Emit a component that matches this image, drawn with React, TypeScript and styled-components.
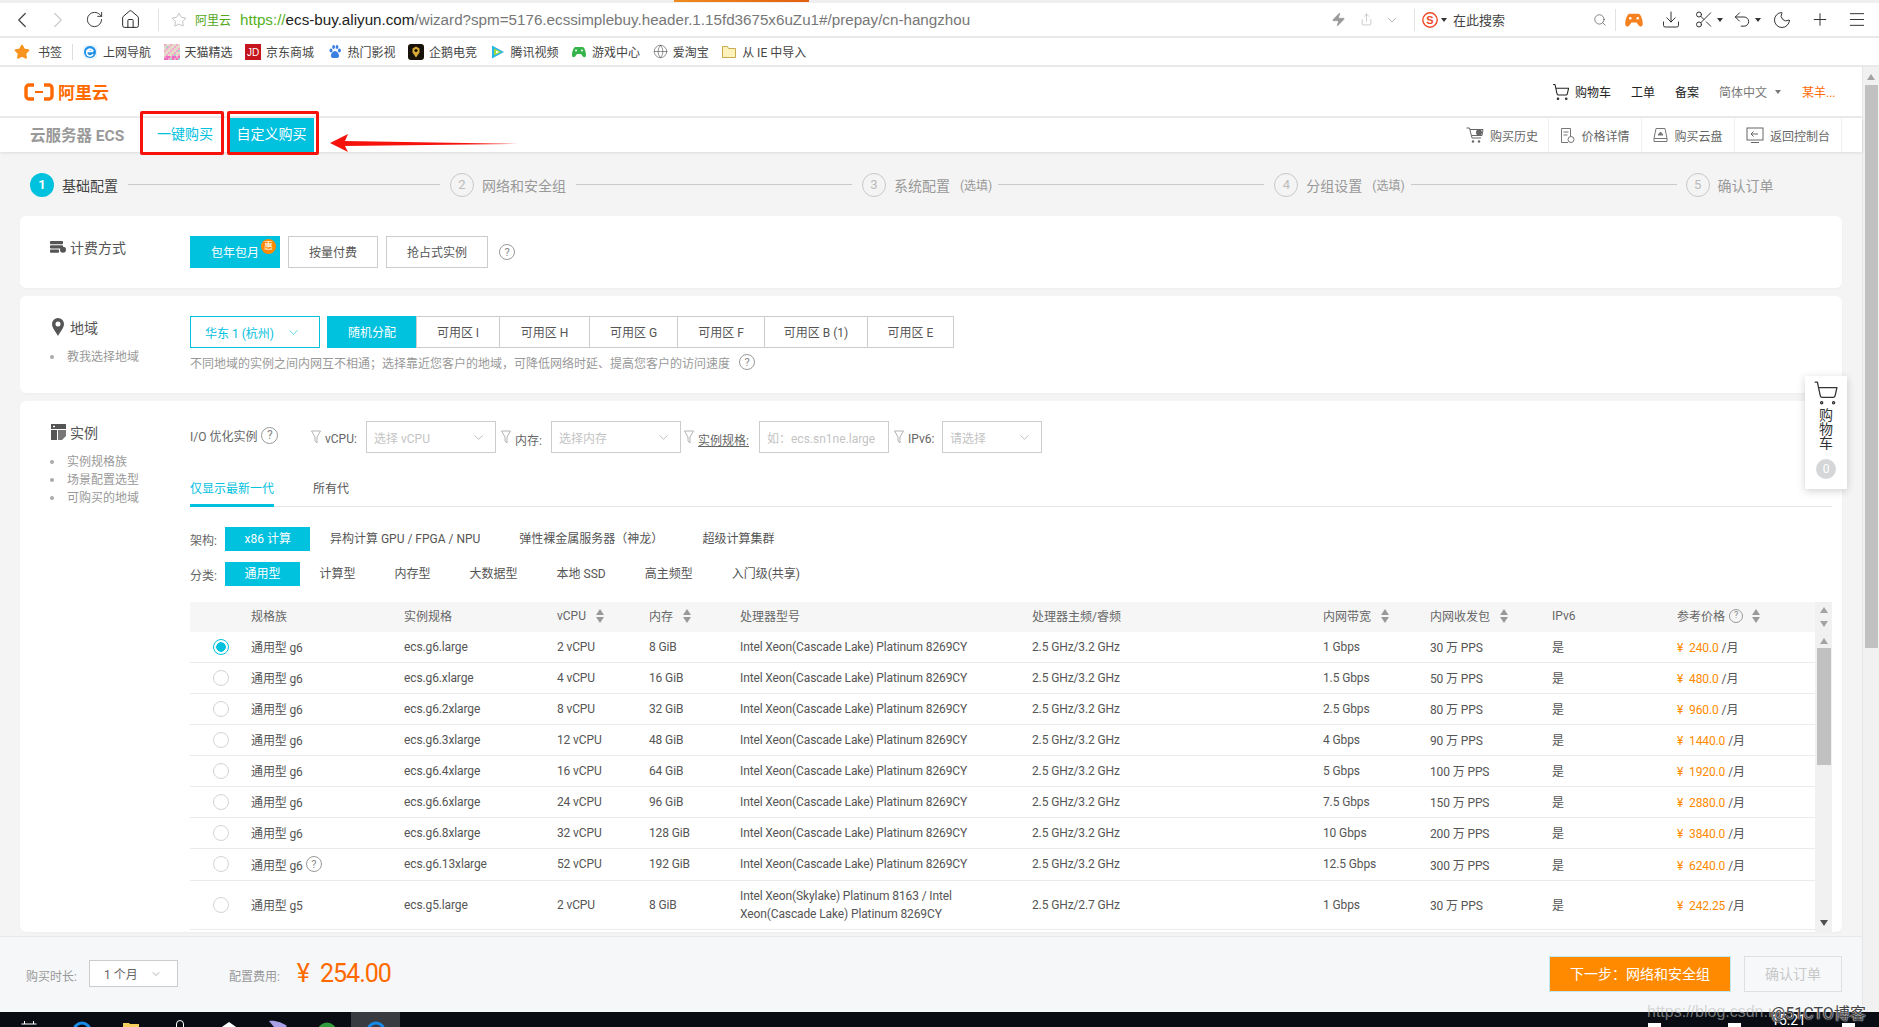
import React from "react";
import styled, { createGlobalStyle } from "styled-components";
import {
  ChevronLeft,
  ChevronRight,
  ChevronDown,
  RotateCw,
  Home,
  Star,
  Zap,
  Share,
  Search,
  Download,
  Scissors,
  Undo2,
  Moon,
  Plus,
  Menu,
  ShoppingCart,
  Globe,
} from "lucide-react";

const CYAN = "#00c1de";
const FONT = `Roboto, "Noto Sans CJK SC", sans-serif`;

const GlobalStyle = createGlobalStyle`
  html, body { margin: 0; padding: 0; background: #fff; }
  body { font-family: ${FONT}; font-size: 12px; color: #555; }
  * { box-sizing: border-box; }
`;

const Screen = styled.div`
  position: relative;
  width: 1879px;
  height: 1027px;
  overflow: hidden;
  display: flex;
  flex-direction: column;
`;

/* browser chrome */
const TabStrip = styled.div`
  height: 3px;
  background: #efefef;
  padding-left: 674px;
`;
const ActiveTab = styled.div`
  width: 135px;
  height: 2px;
  background: linear-gradient(90deg, #f08a1d, #e2600f);
`;
const Toolbar = styled.div`
  height: 35px;
  display: flex;
  align-items: center;
  padding-left: 4px;
  border-bottom: 2px solid #e9e9e9;
  background: #fff;
`;
const Slot = styled.span<{ $w?: number; $ml?: number }>`
  width: ${(p) => p.$w ?? 20}px;
  margin-left: ${(p) => p.$ml ?? 0}px;
  flex: none;
  display: flex;
  justify-content: center;
  align-items: center;
  color: #444;
`;
const ToolSep = styled.span<{ $ml: number }>`
  width: 1px;
  height: 22px;
  background: #e2e2e2;
  margin-left: ${(p) => p.$ml}px;
  flex: none;
`;
const Caret = styled.span<{ $ml?: number; $color?: string }>`
  width: 0;
  height: 0;
  flex: none;
  margin-left: ${(p) => p.$ml ?? 0}px;
  border: 3.5px solid transparent;
  border-top: 4px solid ${(p) => p.$color ?? "#333"};
  border-bottom: 0;
`;
const SiteName = styled.span`
  color: #52a818;
  font-size: 12px;
  margin-left: 6px;
  width: 36px;
  flex: none;
`;
const Url = styled.div`
  font-family: "Liberation Sans", sans-serif;
  font-size: 15.2px;
  margin-left: 9px;
  width: 1088px;
  flex: none;
  color: #777;
  white-space: nowrap;
`;
const UrlScheme = styled.span`
  color: #55b01e;
`;
const UrlHost = styled.span`
  color: #222;
`;
const SearchText = styled.span`
  font-size: 13px;
  color: #444;
  margin-left: 6px;
  width: 52px;
  flex: none;
`;
const Bookmarks = styled.div`
  height: 29px;
  display: flex;
  align-items: center;
  padding-left: 14px;
  border-bottom: 2px solid #e9e9e9;
  background: #fff;
  color: #444;
`;
const Bookmark = styled.span<{ $gap?: number; $ml?: number }>`
  display: flex;
  align-items: center;
  gap: ${(p) => p.$gap ?? 5}px;
  margin-left: ${(p) => p.$ml ?? 12.5}px;
  white-space: nowrap;
`;
const BookmarkSep = styled.span`
  width: 1px;
  height: 16px;
  background: #ddd;
  margin-left: 10px;
`;

/* page shell */
const Viewport = styled.div`
  flex: 1;
  min-height: 0;
  display: flex;
`;
const Page = styled.div`
  position: relative;
  width: 1862px;
  display: flex;
  flex-direction: column;
  background: #f4f4f4;
`;
const PageScrollbar = styled.div`
  width: 17px;
  background: #f1f1f1;
  border-left: 1px solid #e6e6e6;
  display: flex;
  flex-direction: column;
  align-items: center;
  padding-top: 7px;
`;
const PageThumb = styled.div`
  width: 13px;
  height: 563px;
  background: #c1c1c1;
  margin-top: 5px;
`;
const ScrollArrow = styled.span<{ $down?: boolean; $color?: string }>`
  width: 0;
  height: 0;
  flex: none;
  border-left: 4px solid transparent;
  border-right: 4px solid transparent;
  ${(p) =>
    p.$down
      ? `border-top: 6px solid ${p.$color ?? "#505050"};`
      : `border-bottom: 6px solid ${p.$color ?? "#a3a3a3"};`}
`;

const LogoRow = styled.div`
  height: 51px;
  display: flex;
  align-items: center;
  padding: 0 22px 0 24px;
  background: #fff;
  border-bottom: 2px solid #ececec;
`;
const LogoText = styled.span`
  font-size: 17px;
  font-weight: 700;
  color: #ff6a00;
  margin-left: 4px;
`;
const TopLinks = styled.div`
  margin-left: auto;
  display: flex;
  align-items: center;
  color: #333;
`;
const TopLink = styled.span<{ $ml?: number; $color?: string; $w?: number }>`
  margin-left: ${(p) => p.$ml ?? 20}px;
  color: ${(p) => p.$color ?? "#222"};
  width: ${(p) => (p.$w ? `${p.$w}px` : "auto")};
  display: flex;
  align-items: center;
  white-space: nowrap;
`;
const SubNav = styled.div`
  position: relative;
  z-index: 2;
  height: 34px;
  display: flex;
  background: #fff;
  padding-left: 30px;
  box-shadow: 0 1px 3px rgba(0, 0, 0, 0.1);
`;
const ProductName = styled.div`
  font-size: 15.5px;
  font-weight: 700;
  color: #999;
  line-height: 36px;
  width: 111px;
  white-space: nowrap;
`;
const SubTab = styled.div<{ $active?: boolean; $w: number }>`
  width: ${(p) => p.$w}px;
  font-size: 14px;
  line-height: 32px;
  text-align: center;
  color: ${(p) => (p.$active ? "#fff" : CYAN)};
  background: ${(p) => (p.$active ? CYAN : "#fff")};
`;
const SubLinks = styled.div`
  margin-left: auto;
  display: flex;
  margin-right: 20px;
  color: #666;
`;
const SubLink = styled.div<{ $w: number }>`
  width: ${(p) => p.$w}px;
  display: flex;
  align-items: center;
  justify-content: center;
  gap: 6px;
  border-right: 1px solid #f0f0f0;
  white-space: nowrap;
`;
const RedMark = styled.div<{ $left: number; $w: number }>`
  position: absolute;
  left: ${(p) => p.$left}px;
  top: -7px;
  width: ${(p) => p.$w}px;
  height: 44px;
  border: 3px solid #f5130c;
  border-radius: 2px;
`;
const RedArrow = styled.svg`
  position: absolute;
  left: 330px;
  top: 16px;
`;

/* stepper */
const Scroll = styled.div`
  flex: 1;
  min-height: 0;
  overflow: hidden;
  padding: 0 20px;
`;
const Stepper = styled.div`
  height: 64px;
  padding: 1px 0 0 10px;
  display: flex;
  align-items: center;
  color: #999;
  font-size: 14px;
`;
const StepNo = styled.span<{ $on?: boolean; $ml?: number }>`
  width: 24px;
  height: 24px;
  border-radius: 50%;
  flex: none;
  margin-left: ${(p) => p.$ml ?? 0}px;
  display: flex;
  align-items: center;
  justify-content: center;
  font-size: 13px;
  color: ${(p) => (p.$on ? "#fff" : "#bbb")};
  font-weight: ${(p) => (p.$on ? 700 : 400)};
  background: ${(p) => (p.$on ? CYAN : "transparent")};
  border: ${(p) => (p.$on ? "0" : "1px solid #c8c8c8")};
`;
const StepName = styled.span<{ $on?: boolean }>`
  margin-left: 8px;
  color: ${(p) => (p.$on ? "#444" : "#999")};
  white-space: nowrap;
`;
const StepOpt = styled.span`
  margin-left: 10px;
  font-size: 12px;
  white-space: nowrap;
`;
const StepLine = styled.span<{ $w: number; $ml: number }>`
  width: ${(p) => p.$w}px;
  margin-left: ${(p) => p.$ml}px;
  height: 1px;
  background: #c9c9c9;
  flex: none;
`;

/* cards */
const Card = styled.section<{ $h?: number }>`
  display: grid;
  grid-template-columns: 140px 1fr;
  align-items: start;
  padding: 20px 0 0 30px;
  background: #fff;
  border-radius: 6px;
  margin-bottom: 8px;
  min-height: ${(p) => p.$h ?? 0}px;
  box-shadow: 0 1px 2px rgba(0, 0, 0, 0.03);
`;
const SideTitle = styled.div`
  display: flex;
  align-items: center;
  height: 22px;
  font-size: 14px;
  color: #555;
  gap: 4px;
`;
const SideIcon = styled.span`
  width: 16px;
  display: flex;
  justify-content: center;
`;
const SideList = styled.ul`
  list-style: none;
  margin: 10px 0 0;
  padding: 0;
`;
const SideItem = styled.li`
  height: 18px;
  line-height: 18px;
  padding-left: 17px;
  color: #999;
  position: relative;
  &::before {
    content: "";
    position: absolute;
    left: 0;
    top: 7px;
    width: 4px;
    height: 4px;
    border-radius: 50%;
    background: #aaa;
  }
`;
const ButtonRow = styled.div`
  display: flex;
  align-items: center;
  height: 32px;
  gap: 8px;
`;
const ChoiceButton = styled.div<{ $w: number; $on?: boolean }>`
  position: relative;
  width: ${(p) => p.$w}px;
  height: 32px;
  line-height: 33px;
  text-align: center;
  color: ${(p) => (p.$on ? "#fff" : "#555")};
  background: ${(p) => (p.$on ? CYAN : "#fff")};
  border: 1px solid ${(p) => (p.$on ? CYAN : "#ccc")};
`;
const Badge = styled.span`
  position: absolute;
  right: 3px;
  top: 2px;
  width: 15px;
  height: 15px;
  border-radius: 50%;
  background: #ff8a00;
  color: #fff;
  font-size: 9px;
  line-height: 15px;
  text-align: center;
`;
const Help = styled.span<{ $size?: number; $ml?: number }>`
  display: inline-flex;
  flex: none;
  align-items: center;
  justify-content: center;
  width: ${(p) => p.$size ?? 16}px;
  height: ${(p) => p.$size ?? 16}px;
  margin-left: ${(p) => p.$ml ?? 0}px;
  border: 1px solid #999;
  border-radius: 50%;
  color: #888;
  font-size: ${(p) => (p.$size ?? 16) - 5}px;
  line-height: 1;
`;
const RegionRow = styled.div`
  display: flex;
`;
const SelectBox = styled.div<{ $w: number; $h?: number; $tone?: "cyan" | "mute" | "plain"; $ml?: number }>`
  width: ${(p) => p.$w}px;
  height: ${(p) => p.$h ?? 32}px;
  margin-left: ${(p) => p.$ml ?? 0}px;
  flex: none;
  display: flex;
  align-items: center;
  justify-content: space-between;
  padding: 0 ${(p) => (p.$tone === "cyan" ? 18 : p.$tone === "plain" ? 15 : 9)}px 0
    ${(p) => (p.$tone === "mute" ? 7 : 14)}px;
  background: #fff;
  border: 1px solid ${(p) => (p.$tone === "cyan" ? CYAN : "#ccc")};
  color: ${(p) => (p.$tone === "cyan" ? CYAN : p.$tone === "plain" ? "#666" : "#c4c4c4")};
  white-space: nowrap;
`;
const Zones = styled.div`
  display: flex;
  margin-left: 7px;
`;
const Zone = styled.div<{ $w: number; $on?: boolean }>`
  width: ${(p) => p.$w}px;
  height: 32px;
  line-height: 32px;
  text-align: center;
  margin-right: -1px;
  color: ${(p) => (p.$on ? "#fff" : "#555")};
  background: ${(p) => (p.$on ? CYAN : "#fff")};
  border: 1px solid ${(p) => (p.$on ? CYAN : "#ccc")};
  white-space: nowrap;
`;
const Hint = styled.div`
  margin-top: 5px;
  height: 18px;
  display: flex;
  align-items: center;
  gap: 9px;
  color: #999;
`;

/* instance card */
const FilterRow = styled.div`
  display: flex;
  align-items: flex-start;
  height: 32px;
`;
const IoLabel = styled.span`
  display: flex;
  align-items: center;
  gap: 4px;
  height: 28px;
  color: #666;
  width: 121px;
  flex: none;
`;
const FilterGroup = styled.div<{ $ml?: number }>`
  display: flex;
  align-items: center;
  margin-left: ${(p) => p.$ml ?? 5}px;
`;
const FilterLabel = styled.span<{ $link?: boolean; $w: number }>`
  width: ${(p) => p.$w}px;
  margin-left: 4px;
  padding-top: 4px;
  flex: none;
  color: #666;
  white-space: nowrap;
  text-decoration: ${(p) => (p.$link ? "underline" : "none")};
`;
const Tabs = styled.div`
  display: flex;
  gap: 39px;
  margin: 20px 14px 0 0;
  height: 34px;
  border-bottom: 1px solid #e6e6e6;
`;
const Tab = styled.div<{ $on?: boolean }>`
  height: 34px;
  line-height: 32px;
  color: ${(p) => (p.$on ? CYAN : "#555")};
  border-bottom: ${(p) => (p.$on ? `3px solid ${CYAN}` : "0")};
`;
const PickRow = styled.div<{ $mt: number }>`
  display: flex;
  align-items: center;
  height: 24px;
  margin-top: ${(p) => p.$mt}px;
`;
const PickLabel = styled.span`
  width: 35px;
  color: #666;
  flex: none;
`;
const Pick = styled.span<{ $on?: boolean }>`
  height: 24px;
  line-height: 24px;
  padding: 0 19.5px;
  white-space: nowrap;
  color: ${(p) => (p.$on ? "#fff" : "#555")};
  background: ${(p) => (p.$on ? CYAN : "transparent")};
`;

const COLUMNS = "61px 153px 153px 92px 91px 292px 291px 107px 122px 125px 138px";
const Table = styled.div`
  margin: 16px 14px 0 0;
`;
const TableHead = styled.div`
  display: flex;
  height: 30px;
  background: #f6f6f6;
`;
const HeadCells = styled.div`
  width: 1625px;
  display: grid;
  grid-template-columns: ${COLUMNS};
  align-items: center;
  padding-bottom: 3px;
  color: #666;
`;
const HeadCell = styled.div`
  display: flex;
  align-items: center;
  white-space: nowrap;
`;
const HeadArrows = styled.div`
  width: 17px;
  background: #f1f1f1;
  display: flex;
  flex-direction: column;
  align-items: center;
  justify-content: center;
  gap: 8px;
`;
const Sort = styled.span<{ $ml?: number }>`
  display: inline-flex;
  flex-direction: column;
  gap: 2px;
  margin-left: ${(p) => p.$ml ?? 10}px;
`;
const TableBody = styled.div`
  display: flex;
  height: 300px;
  overflow: hidden;
`;
const Rows = styled.div`
  width: 1625px;
`;
const Row = styled.div<{ $h?: number }>`
  display: grid;
  grid-template-columns: ${COLUMNS};
  align-items: center;
  height: ${(p) => p.$h ?? 31}px;
  padding-bottom: 1px;
  border-bottom: 1px solid #ebebeb;
  letter-spacing: -0.12px;
`;
const Radio = styled.span<{ $on?: boolean }>`
  justify-self: start;
  margin-left: 23px;
  width: 16px;
  height: 16px;
  border-radius: 50%;
  border: 1px solid ${(p) => (p.$on ? CYAN : "#d4d4d4")};
  background: ${(p) => (p.$on ? `radial-gradient(circle, ${CYAN} 0 4.5px, #fff 5px)` : "#fff")};
`;
const Cell = styled.div`
  white-space: nowrap;
  display: flex;
  align-items: center;
`;
const WrapCell = styled.div`
  line-height: 18px;
  width: 280px;
`;
const Price = styled.span`
  color: #ff8a00;
  word-spacing: 3px;
  margin-right: 3px;
`;
const BodyScrollbar = styled.div`
  width: 17px;
  background: #f1f1f1;
  display: flex;
  flex-direction: column;
  align-items: center;
  padding-top: 6px;
`;
const BodyThumb = styled.div`
  width: 14px;
  height: 117px;
  background: #c1c1c1;
  margin: 4px 0 155px;
`;

/* footer */
const Footer = styled.footer`
  position: relative;
  z-index: 3;
  height: 76px;
  flex: none;
  display: flex;
  align-items: center;
  padding: 0 20px 2px 26px;
  background: #f5f7f9;
  border-top: 1px solid #e8e8e8;
`;
const FooterLabel = styled.span<{ $ml?: number }>`
  color: #999;
  margin-left: ${(p) => p.$ml ?? 0}px;
  padding-top: 4px;
  white-space: nowrap;
`;
const PriceTotal = styled.span`
  font-size: 25px;
  color: #ff6a00;
  margin-left: 17px;
  display: flex;
  gap: 10px;
`;
const PriceDigits = styled.span`
  letter-spacing: -1px;
`;
const NextButton = styled.div`
  margin-left: auto;
  width: 182px;
  height: 36px;
  line-height: 34px;
  text-align: center;
  font-size: 14px;
  color: #fff;
  background: #ff8a00;
  border: 1px solid #bfe9f2;
`;
const ConfirmButton = styled.div`
  margin-left: 13px;
  width: 98px;
  height: 36px;
  line-height: 34px;
  text-align: center;
  font-size: 14px;
  color: #c8c8c8;
  background: #f7f8f9;
  border: 1px solid #e0e0e0;
`;

/* taskbar */
const Taskbar = styled.div`
  height: 15px;
  flex: none;
  position: relative;
  z-index: 4;
  display: flex;
  background: #090d13;
  overflow: hidden;
`;
const TaskSlot = styled.div<{ $on?: boolean; $w?: number }>`
  width: ${(p) => p.$w ?? 49}px;
  flex: none;
  display: flex;
  justify-content: center;
  background: ${(p) => (p.$on ? "#383b40" : "transparent")};
  padding-top: 8px;
`;
const Tray = styled.div`
  margin-left: auto;
  display: flex;
  padding-right: 24px;
  color: #fff;
`;
const TrayDot = styled.span<{ $w?: number; $ml: number }>`
  width: ${(p) => p.$w ?? 13}px;
  height: 4px;
  margin: 11px 0 0 ${(p) => p.$ml}px;
  background: #fff;
`;
const Clock = styled.span`
  font-size: 14px;
  line-height: 16px;
  margin-left: 30px;
`;

/* overlays */
const CartPanel = styled.aside`
  position: absolute;
  left: 1805px;
  top: 309px;
  width: 42px;
  height: 113px;
  z-index: 2;
  background: #fff;
  box-shadow: 0 2px 8px rgba(0, 0, 0, 0.18);
  display: flex;
  flex-direction: column;
  align-items: center;
  padding-top: 4px;
  color: #333;
  font-size: 14px;
  line-height: 14px;
`;
const CartText = styled.div`
  width: 14px;
  margin-top: 2px;
  text-align: center;
`;
const CartCount = styled.span`
  width: 20px;
  height: 20px;
  margin-top: 9px;
  border-radius: 50%;
  background: #d4d6d8;
  color: #fff;
  font-size: 12px;
  line-height: 20px;
  text-align: center;
`;
const Watermark = styled.div`
  position: absolute;
  z-index: 6;
  left: 1647px;
  top: 1000px;
  display: flex;
  align-items: center;
  white-space: nowrap;
`;
const WatermarkLight = styled.span`
  font-family: "Liberation Sans", sans-serif;
  font-size: 16px;
  color: rgba(190, 190, 190, 0.6);
  width: 124px;
  overflow: hidden;
`;
const WatermarkBold = styled.span`
  font-size: 16px;
  color: #444;
  text-shadow: 0 0 1px #fff, 0 0 2px #fff;
`;

const Stroke = { strokeWidth: 1.1 };

const Logo = () => (
  <svg width="30" height="18" viewBox="0 0 30 18" fill="none" stroke="#ff6a00" strokeWidth="3.4">
    <path d="M10 2H5a3 3 0 0 0-3 3v8a3 3 0 0 0 3 3h5" />
    <path d="M20 2h5a3 3 0 0 1 3 3v8a3 3 0 0 1-3 3h-5" />
    <path d="M11 9h8" strokeWidth="2" />
  </svg>
);

const IeIcon = () => (
  <svg width="16" height="16" viewBox="0 0 16 16">
    <rect x="1" y="1" width="14" height="14" rx="4" fill="#e8f3fc" />
    <circle cx="8" cy="8" r="6" fill="#1e90e8" />
    <path d="M4.800 7.400h6.400M11 10.200A3.400 3.400 0 1 1 11.200 7.400" fill="none" stroke="#fff" strokeWidth="1.600" />
  </svg>
);

const TmallIcon = () => (
  <svg width="16" height="16" viewBox="0 0 16 16">
    {Array.from({ length: 8 }).map((_, y) =>
      Array.from({ length: 8 }).map((_, x) => (
        <rect
          key={`${x}-${y}`}
          x={x * 2}
          y={y * 2}
          width="2"
          height="2"
          fill={(x + y) % 3 === 0 ? "#f4a6cf" : (x * y) % 4 === 1 ? "#a7d8c4" : y > 5 ? "#ee6fc0" : "#e3dcc8"}
        />
      ))
    )}
  </svg>
);

const JdIcon = () => (
  <svg width="16" height="16" viewBox="0 0 16 16">
    <rect width="16" height="16" fill="#c4161c" />
    <text x="8" y="12" fontSize="10" fill="#fff" textAnchor="middle" fontFamily="Liberation Sans">
      JD
    </text>
  </svg>
);

const PawIcon = () => (
  <svg width="16" height="16" viewBox="0 0 16 16" fill="#3b7fe0">
    <ellipse cx="4" cy="6.500" rx="1.500" ry="2" />
    <ellipse cx="6.600" cy="3" rx="1.400" ry="2" />
    <ellipse cx="10" cy="3" rx="1.400" ry="2" />
    <ellipse cx="12.400" cy="6.500" rx="1.500" ry="2" />
    <path d="M8 7c-2 0-4.500 3-4 5.500.5 2 3 1.500 4 1.500s3.500.5 4-1.500C12.500 10 10 7 8 7z" />
  </svg>
);

const PenguinIcon = () => (
  <svg width="16" height="16" viewBox="0 0 16 16">
    <rect width="16" height="16" rx="3" fill="#17130a" />
    <path d="M8 2.500l3.500 2v4L8 13.500 4.500 8.500v-4z" fill="#d8a838" />
    <circle cx="8" cy="6.500" r="1.600" fill="#17130a" />
  </svg>
);

const PlayIcon = () => (
  <svg width="16" height="16" viewBox="0 0 16 16">
    <path d="M2 1.500l12 6.500-12 6.500z" fill="#27b4e8" />
    <path d="M4 4.500l7.500 3.500L4 11.500z" fill="#9fd93a" />
    <path d="M6 6.500l3 1.500-3 1.500z" fill="#fff" />
  </svg>
);

const PadIcon = ({ color = "#35b44a", size = 16 }: { color?: string; size?: number }) => (
  <svg width={size} height={size} viewBox="0 0 16 16">
    <path
      d="M4.500 3h7c2 0 3.500 5 3.500 8 0 2.500-2 3-3.500 1L10 10H6l-1.500 2C3 14 1 13.500 1 11c0-3 1.500-8 3.500-8z"
      fill={color}
    />
    <circle cx="5" cy="6.500" r="1" fill="#fff" />
    <circle cx="11" cy="6.500" r="1" fill="#fff" />
  </svg>
);

const FolderIcon = () => (
  <svg width="16" height="16" viewBox="0 0 16 16">
    <path d="M1.500 2.500h5l1 2h7v9h-13z" fill="#fdf2bc" stroke="#c9a94a" />
  </svg>
);

const SogouIcon = () => (
  <svg width="16" height="16" viewBox="0 0 16 16">
    <circle cx="8" cy="8" r="7.200" fill="#fff" stroke="#f0492a" strokeWidth="1.400" />
    <text x="8" y="12" fontSize="11" fontWeight="700" fill="#f0492a" textAnchor="middle" fontFamily="Liberation Sans">
      S
    </text>
  </svg>
);

const BillingIcon = () => (
  <svg width="16" height="12" viewBox="0 0 16 12" fill="#555">
    <rect y="0" width="13" height="3.200" rx="0.800" />
    <rect y="4.300" width="13" height="3.200" rx="0.800" />
    <rect y="8.600" width="9" height="3.200" rx="0.800" />
    <circle cx="13" cy="8.800" r="3" />
  </svg>
);

const PinIcon = () => (
  <svg width="12" height="18" viewBox="0 0 12 18">
    <path
      fillRule="evenodd"
      d="M6 0a6 6 0 0 1 6 6c0 4-4 8-6 12C4 14 0 10 0 6a6 6 0 0 1 6-6zm0 3.500a2.500 2.500 0 1 0 0 5 2.500 2.500 0 0 0 0-5z"
      fill="#555"
    />
  </svg>
);

const InstanceIcon = () => (
  <svg width="15" height="16" viewBox="0 0 15 16" fill="#555">
    <rect width="15" height="5" />
    <rect y="6" width="6" height="10" />
    <path d="M7 6h8v6l-4 4H7z" fill="#777" />
    <rect x="2" y="1.800" width="2" height="1.400" fill="#fff" />
  </svg>
);

const FilterIcon = () => (
  <svg width="10" height="14" viewBox="0 0 10 14" fill="none" stroke="#aaa" strokeWidth="0.9">
    <path d="M.5 1h9L6 7v6L4 11V7z" />
  </svg>
);

const HistoryIcon = () => (
  <svg width="18" height="18" viewBox="0 0 18 18" fill="none" stroke="#666">
    <path d="M.5 2h3l2.500 10h9" />
    <path d="M4 3.500h13l-1 6H6" />
    <circle cx="13" cy="6.500" r="3" fill="#666" stroke="none" />
    <circle cx="7" cy="15.500" r="1.200" fill="#666" stroke="none" />
    <circle cx="13" cy="15.500" r="1.200" fill="#666" stroke="none" />
  </svg>
);

const PriceIcon = () => (
  <svg width="15" height="17" viewBox="0 0 15 17" fill="none" stroke="#777">
    <path d="M8 15.500H1.500v-14h9V9" />
    <path d="M3.500 5h5M3.500 8h4" />
    <circle cx="11" cy="12.500" r="3" />
  </svg>
);

const DiskIcon = () => (
  <svg width="15" height="16" viewBox="0 0 15 16" fill="none" stroke="#777">
    <path d="M3 1.500h9l2 10v3H1v-3z" />
    <path d="M1 11.500h13" />
    <path d="M5 8l2.500-3L10 8z" fill="#777" />
  </svg>
);

const ReturnIcon = () => (
  <svg width="18" height="17" viewBox="0 0 18 17" fill="none" stroke="#666">
    <rect x="1" y="1" width="16" height="12" />
    <path d="M12 7H5M7.500 4.500L5 7l2.500 2.500M5 15.500h8" />
  </svg>
);

const SortArrows = ({ ml }: { ml?: number }) => (
  <Sort $ml={ml}>
    <ScrollArrow $color="#999" />
    <ScrollArrow $down $color="#999" />
  </Sort>
);

const Chevron = () => <ChevronDown size={15} strokeWidth={1} color="#999" />;

const taskIcons: React.ReactNode[] = [
  <circle key="a" cx="10" cy="11" r="8" fill="none" stroke="#1789e6" strokeWidth="3" />,
  <path key="b" d="M2 3h6l1 1h9v14H2z" fill="#f4cf5e" />,
  <g key="c">
    <path d="M6.500 7V4a3.500 3.500 0 0 1 7 0v3" fill="none" stroke="#fff" />
    <rect x="2" y="7" width="16" height="12" fill="#fff" />
  </g>,
  <g key="d">
    <path d="M10 2l10 7H0z" fill="#fff" />
    <rect x="3" y="9" width="14" height="9" fill="#ddd" />
  </g>,
  <path key="e" d="M1 1c6-1 14 2 18 5-4 4-10 3-13 1z" fill="#a9a0e8" />,
  <circle key="f" cx="10" cy="12" r="9.500" fill="#2f9b3a" />,
];

type Spec = {
  spec: string;
  vcpu: string;
  mem: string;
  bw: string;
  pps: string;
  price: string;
};

const CPU = "Intel Xeon(Cascade Lake) Platinum 8269CY";
const specs: Spec[] = [
  { spec: "ecs.g6.large", vcpu: "2 vCPU", mem: "8 GiB", bw: "1 Gbps", pps: "30 万 PPS", price: "240.0" },
  { spec: "ecs.g6.xlarge", vcpu: "4 vCPU", mem: "16 GiB", bw: "1.5 Gbps", pps: "50 万 PPS", price: "480.0" },
  { spec: "ecs.g6.2xlarge", vcpu: "8 vCPU", mem: "32 GiB", bw: "2.5 Gbps", pps: "80 万 PPS", price: "960.0" },
  { spec: "ecs.g6.3xlarge", vcpu: "12 vCPU", mem: "48 GiB", bw: "4 Gbps", pps: "90 万 PPS", price: "1440.0" },
  { spec: "ecs.g6.4xlarge", vcpu: "16 vCPU", mem: "64 GiB", bw: "5 Gbps", pps: "100 万 PPS", price: "1920.0" },
  { spec: "ecs.g6.6xlarge", vcpu: "24 vCPU", mem: "96 GiB", bw: "7.5 Gbps", pps: "150 万 PPS", price: "2880.0" },
  { spec: "ecs.g6.8xlarge", vcpu: "32 vCPU", mem: "128 GiB", bw: "10 Gbps", pps: "200 万 PPS", price: "3840.0" },
  { spec: "ecs.g6.13xlarge", vcpu: "52 vCPU", mem: "192 GiB", bw: "12.5 Gbps", pps: "300 万 PPS", price: "6240.0" },
];

const zones: [string, number][] = [
  ["随机分配", 90],
  ["可用区 I", 84],
  ["可用区 H", 91],
  ["可用区 G", 89],
  ["可用区 F", 88],
  ["可用区 B (1)", 104],
  ["可用区 E", 87],
];

const bookmarks: [React.ReactNode, string][] = [
  [<IeIcon />, "上网导航"],
  [<TmallIcon />, "天猫精选"],
  [<JdIcon />, "京东商城"],
  [<PawIcon />, "热门影视"],
  [<PenguinIcon />, "企鹅电竞"],
  [<PlayIcon />, "腾讯视频"],
  [<PadIcon />, "游戏中心"],
  [<Globe size={15} strokeWidth={1} color="#555" />, "爱淘宝"],
  [<FolderIcon />, "从 IE 中导入"],
];

const App = () => (
  <Screen>
    <GlobalStyle />
    <TabStrip>
      <ActiveTab />
    </TabStrip>
    <Toolbar>
      <Slot $w={36}><ChevronLeft size={26} {...Stroke} /></Slot>
      <Slot $w={36}><ChevronRight size={26} {...Stroke} color="#ccc" /></Slot>
      <Slot $w={36}><RotateCw size={19} {...Stroke} color="#222" /></Slot>
      <Slot $w={36}><Home size={21} {...Stroke} color="#222" /></Slot>
      <ToolSep $ml={10} />
      <Slot $ml={10}><Star size={16} {...Stroke} color="#aaa" /></Slot>
      <SiteName>阿里云</SiteName>
      <Url>
        <UrlScheme>https://</UrlScheme>
        <UrlHost>ecs-buy.aliyun.com</UrlHost>
        /wizard?spm=5176.ecssimplebuy.header.1.15fd3675x6uZu1#/prepay/cn-hangzhou
      </Url>
      <Slot><Zap size={15} strokeWidth={1} fill="#999" color="#999" /></Slot>
      <Slot $ml={8}><Share size={13} {...Stroke} color="#aaa" /></Slot>
      <Slot $ml={6}><ChevronDown size={16} strokeWidth={1} color="#999" /></Slot>
      <ToolSep $ml={12} />
      <Slot $w={16} $ml={7}><SogouIcon /></Slot>
      <Caret $ml={3} />
      <SearchText>在此搜索</SearchText>
      <Slot $w={16} $ml={87}><Search size={14} {...Stroke} /></Slot>
      <ToolSep $ml={7} />
      <Slot $ml={8}><PadIcon color="#f58220" size={20} /></Slot>
      <Slot $ml={17}><Download size={21} {...Stroke} color="#222" /></Slot>
      <Slot $ml={13}><Scissors size={21} {...Stroke} color="#222" /></Slot>
      <Caret $ml={3} />
      <Slot $ml={9}><Undo2 size={21} {...Stroke} color="#222" /></Slot>
      <Caret $ml={3} />
      <Slot $ml={11}><Moon size={20} {...Stroke} color="#222" /></Slot>
      <Slot $ml={18}><Plus size={23} {...Stroke} color="#222" /></Slot>
      <Slot $ml={17}><Menu size={23} {...Stroke} color="#222" /></Slot>
    </Toolbar>
    <Bookmarks>
      <Bookmark $gap={8} $ml={0}>
        <Star size={16} fill="#f7931e" color="#f7931e" />
        书签
      </Bookmark>
      <BookmarkSep />
      {bookmarks.map(([icon, name], i) => (
        <Bookmark key={name} $ml={i === 0 ? 9 : 12.5}>
          {icon}
          {name}
        </Bookmark>
      ))}
    </Bookmarks>
    <Viewport>
      <Page>
        <LogoRow>
          <Logo />
          <LogoText>阿里云</LogoText>
          <TopLinks>
            <ShoppingCart size={18} strokeWidth={1.4} color="#222" />
            <TopLink $ml={5}>购物车</TopLink>
            <TopLink>工单</TopLink>
            <TopLink>备案</TopLink>
            <TopLink $color="#777">简体中文</TopLink>
            <Caret $ml={8} $color="#777" />
            <TopLink $ml={21} $w={38} $color="#ff6a00">某羊...</TopLink>
          </TopLinks>
        </LogoRow>
        <SubNav>
          <ProductName>云服务器 ECS</ProductName>
          <SubTab $w={88}>一键购买</SubTab>
          <SubTab $w={85} $active>自定义购买</SubTab>
          <SubLinks>
            <SubLink $w={93}><HistoryIcon />购买历史</SubLink>
            <SubLink $w={93}><PriceIcon />价格详情</SubLink>
            <SubLink $w={93}><DiskIcon />购买云盘</SubLink>
            <SubLink $w={107}><ReturnIcon />返回控制台</SubLink>
          </SubLinks>
          <RedMark $left={140} $w={84} />
          <RedMark $left={227} $w={92} />
          <RedArrow width="188" height="18" viewBox="0 0 188 18">
            <path d="M0 9L18 0l-3 7 173 3-173 2 3 6z" fill="#f5130c" />
          </RedArrow>
        </SubNav>
        <Scroll>
          <Stepper>
            <StepNo $on>1</StepNo>
            <StepName $on>基础配置</StepName>
            <StepLine $w={312} $ml={10} />
            <StepNo $ml={10}>2</StepNo>
            <StepName>网络和安全组</StepName>
            <StepLine $w={276} $ml={10} />
            <StepNo $ml={10}>3</StepNo>
            <StepName>系统配置</StepName>
            <StepOpt>(选填)</StepOpt>
            <StepLine $w={266} $ml={6} />
            <StepNo $ml={10}>4</StepNo>
            <StepName>分组设置</StepName>
            <StepOpt>(选填)</StepOpt>
            <StepLine $w={266} $ml={6} />
            <StepNo $ml={9}>5</StepNo>
            <StepName>确认订单</StepName>
          </Stepper>

          <Card $h={72}>
            <SideTitle>
              <SideIcon><BillingIcon /></SideIcon>
              计费方式
            </SideTitle>
            <ButtonRow>
              <ChoiceButton $w={90} $on>
                包年包月
                <Badge>惠</Badge>
              </ChoiceButton>
              <ChoiceButton $w={90}>按量付费</ChoiceButton>
              <ChoiceButton $w={102}>抢占式实例</ChoiceButton>
              <Help $ml={3}>?</Help>
            </ButtonRow>
          </Card>

          <Card $h={97}>
            <div>
              <SideTitle>
                <SideIcon><PinIcon /></SideIcon>
                地域
              </SideTitle>
              <SideList>
                <SideItem>教我选择地域</SideItem>
              </SideList>
            </div>
            <div>
              <RegionRow>
                <SelectBox $w={130} $tone="cyan">
                  华东 1 (杭州)
                  <ChevronDown size={15} strokeWidth={1} color={CYAN} />
                </SelectBox>
                <Zones>
                  {zones.map(([name, w], i) => (
                    <Zone key={name} $w={w} $on={i === 0}>{name}</Zone>
                  ))}
                </Zones>
              </RegionRow>
              <Hint>
                不同地域的实例之间内网互不相通；选择靠近您客户的地域，可降低网络时延、提高您客户的访问速度
                <Help>?</Help>
              </Hint>
            </div>
          </Card>

          <Card>
            <div>
              <SideTitle>
                <SideIcon><InstanceIcon /></SideIcon>
                实例
              </SideTitle>
              <SideList>
                <SideItem>实例规格族</SideItem>
                <SideItem>场景配置选型</SideItem>
                <SideItem>可购买的地域</SideItem>
              </SideList>
            </div>
            <div>
              <FilterRow>
                <IoLabel>
                  I/O 优化实例
                  <Help $size={17}>?</Help>
                </IoLabel>
                <FilterGroup $ml={0}>
                  <FilterIcon />
                  <FilterLabel $w={41}>vCPU:</FilterLabel>
                  <SelectBox $w={130} $tone="mute">选择 vCPU<Chevron /></SelectBox>
                </FilterGroup>
                <FilterGroup>
                  <FilterIcon />
                  <FilterLabel $w={36}>内存:</FilterLabel>
                  <SelectBox $w={130} $tone="mute">选择内存<Chevron /></SelectBox>
                </FilterGroup>
                <FilterGroup $ml={3}>
                  <FilterIcon />
                  <FilterLabel $w={61} $link>实例规格:</FilterLabel>
                  <SelectBox $w={130} $tone="mute">如：ecs.sn1ne.large</SelectBox>
                </FilterGroup>
                <FilterGroup>
                  <FilterIcon />
                  <FilterLabel $w={34}>IPv6:</FilterLabel>
                  <SelectBox $w={100} $tone="mute">请选择<Chevron /></SelectBox>
                </FilterGroup>
              </FilterRow>
              <Tabs>
                <Tab $on>仅显示最新一代</Tab>
                <Tab>所有代</Tab>
              </Tabs>
              <PickRow $mt={20}>
                <PickLabel>架构:</PickLabel>
                <Pick $on>x86 计算</Pick>
                <Pick>异构计算 GPU / FPGA / NPU</Pick>
                <Pick>弹性裸金属服务器（神龙）</Pick>
                <Pick>超级计算集群</Pick>
              </PickRow>
              <PickRow $mt={11}>
                <PickLabel>分类:</PickLabel>
                <Pick $on>通用型</Pick>
                <Pick>计算型</Pick>
                <Pick>内存型</Pick>
                <Pick>大数据型</Pick>
                <Pick>本地 SSD</Pick>
                <Pick>高主频型</Pick>
                <Pick>入门级(共享)</Pick>
              </PickRow>
              <Table>
                <TableHead>
                  <HeadCells>
                    <span />
                    <HeadCell>规格族</HeadCell>
                    <HeadCell>实例规格</HeadCell>
                    <HeadCell>vCPU<SortArrows /></HeadCell>
                    <HeadCell>内存<SortArrows /></HeadCell>
                    <HeadCell>处理器型号</HeadCell>
                    <HeadCell>处理器主频/睿频</HeadCell>
                    <HeadCell>内网带宽<SortArrows /></HeadCell>
                    <HeadCell>内网收发包<SortArrows /></HeadCell>
                    <HeadCell>IPv6</HeadCell>
                    <HeadCell>
                      参考价格
                      <Help $size={14} $ml={4}>?</Help>
                      <SortArrows ml={9} />
                    </HeadCell>
                  </HeadCells>
                  <HeadArrows>
                    <ScrollArrow />
                    <ScrollArrow $down $color="#a3a3a3" />
                  </HeadArrows>
                </TableHead>
                <TableBody>
                  <Rows>
                    {specs.map((s, i) => (
                      <Row key={s.spec} $h={i === 7 ? 32 : 31}>
                        <Radio $on={i === 0} />
                        <Cell>
                          通用型 g6
                          {i === 7 && <Help $ml={3}>?</Help>}
                        </Cell>
                        <Cell>{s.spec}</Cell>
                        <Cell>{s.vcpu}</Cell>
                        <Cell>{s.mem}</Cell>
                        <Cell>{CPU}</Cell>
                        <Cell>2.5 GHz/3.2 GHz</Cell>
                        <Cell>{s.bw}</Cell>
                        <Cell>{s.pps}</Cell>
                        <Cell>是</Cell>
                        <div>
                          <Price>¥ {s.price}</Price>/月
                        </div>
                      </Row>
                    ))}
                    <Row $h={49}>
                      <Radio />
                      <Cell>通用型 g5</Cell>
                      <Cell>ecs.g5.large</Cell>
                      <Cell>2 vCPU</Cell>
                      <Cell>8 GiB</Cell>
                      <WrapCell>Intel Xeon(Skylake) Platinum 8163 / Intel Xeon(Cascade Lake) Platinum 8269CY</WrapCell>
                      <Cell>2.5 GHz/2.7 GHz</Cell>
                      <Cell>1 Gbps</Cell>
                      <Cell>30 万 PPS</Cell>
                      <Cell>是</Cell>
                      <div>
                        <Price>¥ 242.25</Price>/月
                      </div>
                    </Row>
                  </Rows>
                  <BodyScrollbar>
                    <ScrollArrow />
                    <BodyThumb />
                    <ScrollArrow $down />
                  </BodyScrollbar>
                </TableBody>
              </Table>
            </div>
          </Card>
        </Scroll>
        <Footer>
          <FooterLabel>购买时长:</FooterLabel>
          <SelectBox $w={89} $h={27} $ml={12} $tone="plain">
            1 个月
            <ChevronDown size={12} strokeWidth={1} color="#666" />
          </SelectBox>
          <FooterLabel $ml={51}>配置费用:</FooterLabel>
          <PriceTotal>
            <span>¥</span>
            <PriceDigits>254.00</PriceDigits>
          </PriceTotal>
          <NextButton>下一步：网络和安全组</NextButton>
          <ConfirmButton>确认订单</ConfirmButton>
        </Footer>
        <CartPanel>
          <ShoppingCart size={26} strokeWidth={1.2} color="#333" />
          <CartText>购物车</CartText>
          <CartCount>0</CartCount>
        </CartPanel>
      </Page>
      <PageScrollbar>
        <ScrollArrow />
        <PageThumb />
      </PageScrollbar>
    </Viewport>
    <Taskbar>
      <TaskSlot $w={57}>
        <svg width="16" height="16" viewBox="0 0 16 16" fill="none" stroke="#fff">
          <path d="M.5 4h15M3.500 1v3M12.500 1v3" />
        </svg>
      </TaskSlot>
      {taskIcons.map((icon, i) => (
        <TaskSlot key={i}>
          <svg width="20" height="20" viewBox="0 0 20 20">{icon}</svg>
        </TaskSlot>
      ))}
      <TaskSlot $w={49} $on>
        <svg width="20" height="20" viewBox="0 0 20 20">
          <circle cx="10" cy="11" r="8" fill="none" stroke="#1789e6" strokeWidth="3" />
        </svg>
      </TaskSlot>
      <Tray>
        <TrayDot $ml={0} />
        <TrayDot $ml={67} />
        <Clock>15:21</Clock>
        <TrayDot $ml={36} />
      </Tray>
    </Taskbar>
    <Watermark>
      <WatermarkLight>https://blog.csdn.n</WatermarkLight>
      <WatermarkBold>@51CTO博客</WatermarkBold>
    </Watermark>
  </Screen>
);

export default App;
